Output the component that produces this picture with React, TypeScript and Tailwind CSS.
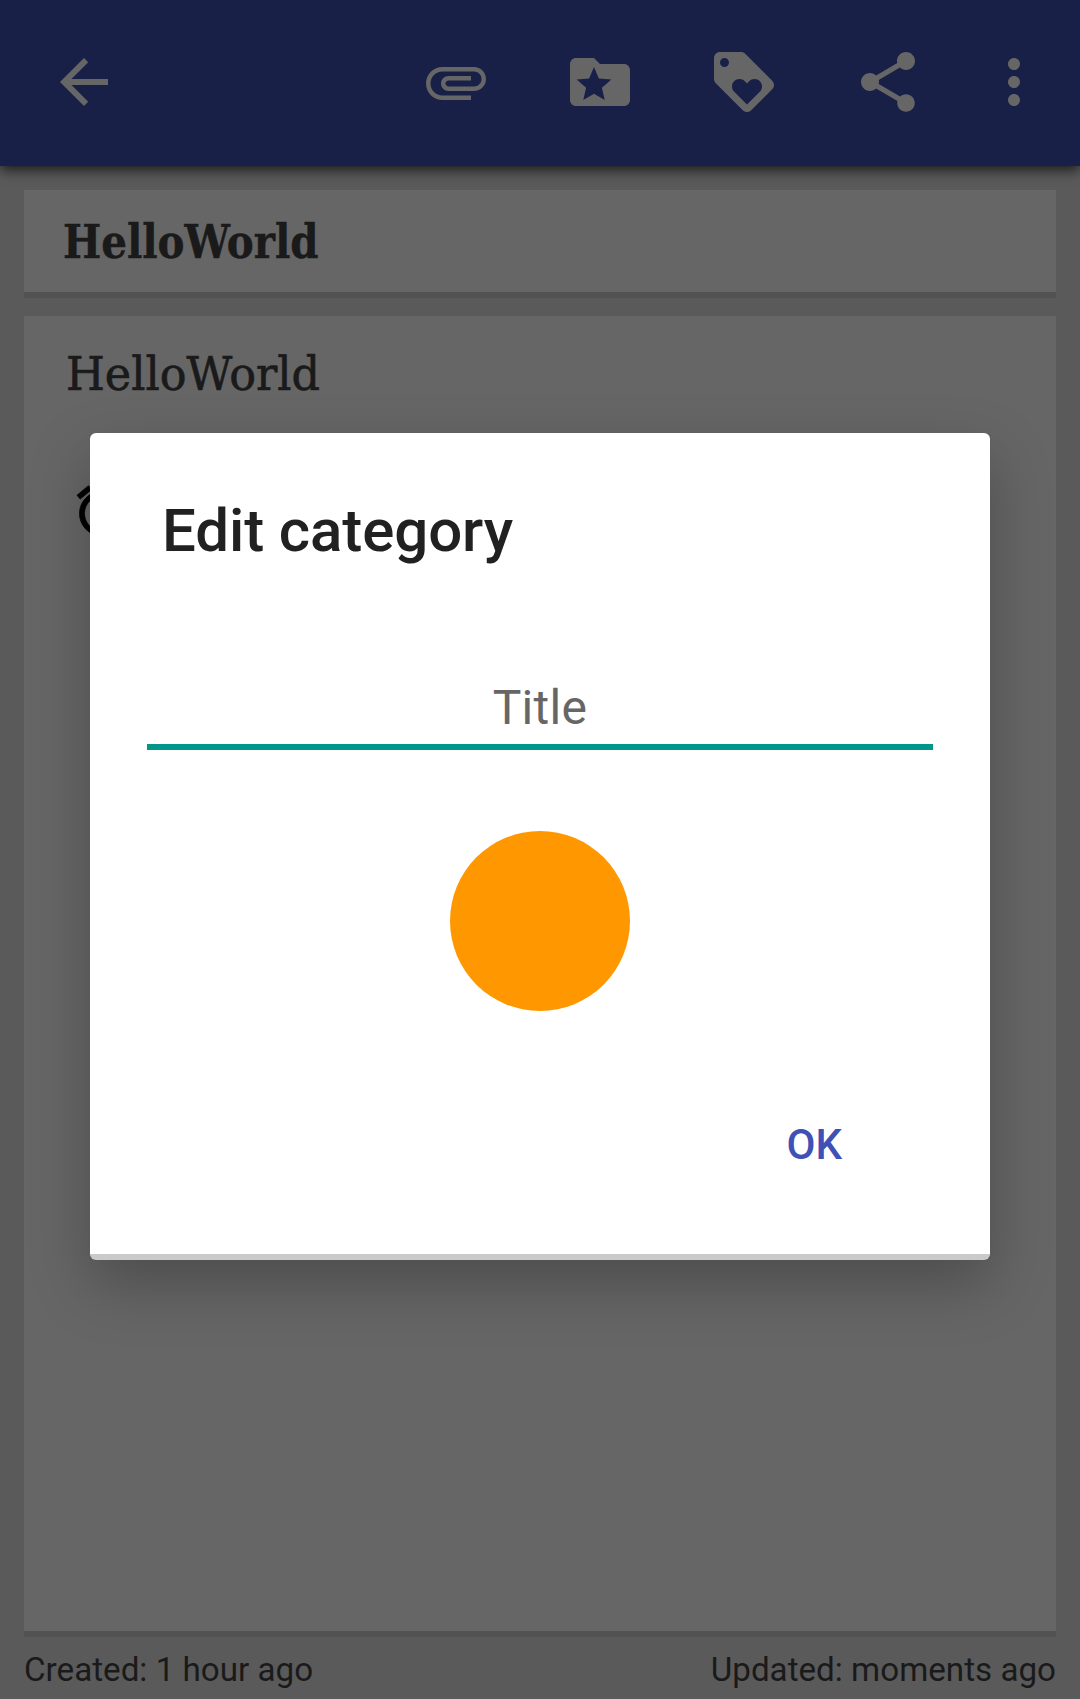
import React from "react";

const icons = {
  back: "M20 11H7.83l5.59-5.59L12 4l-8 8 8 8 1.41-1.41L7.83 13H20v-2z",
  attach:
    "M7.5 18C4.46 18 2 15.54 2 12.5S4.46 7 7.5 7H18c2.21 0 4 1.79 4 4s-1.79 4-4 4H9.5C8.12 15 7 13.88 7 12.5S8.12 10 9.5 10H17v1.5H9.5c-.55 0-1 .45-1 1s.45 1 1 1H18c1.38 0 2.5-1.12 2.5-2.5S19.38 8.5 18 8.5H7.5c-2.21 0-4 1.79-4 4s1.79 4 4 4H17V18H7.5z",
  folder:
    "M20 6h-8l-2-2H4c-1.1 0-2 .9-2 2v12c0 1.1.9 2 2 2h16c1.1 0 2-.9 2-2V8c0-1.1-.9-2-2-2zm-6.42 12L10 15.9 6.42 18l.95-4.07-3.16-2.74 4.16-.36L10 7l1.63 3.84 4.16.36-3.16 2.74.95 4.06z",
  tag: "M21.41 11.58l-9-9C12.05 2.22 11.55 2 11 2H4c-1.1 0-2 .9-2 2v7c0 .55.22 1.05.59 1.42l9 9c.36.36.86.58 1.41.58.55 0 1.05-.22 1.41-.59l7-7c.37-.36.59-.86.59-1.41 0-.55-.23-1.06-.59-1.42zM5.5 7C4.67 7 4 6.33 4 5.5S4.67 4 5.5 4 7 4.67 7 5.5 6.33 7 5.5 7zm11.77 8.27L13 19.54l-4.27-4.27C8.28 14.81 8 14.19 8 13.5c0-1.38 1.12-2.5 2.5-2.5.69 0 1.32.28 1.77.74l.73.72.73-.73c.45-.45 1.08-.73 1.77-.73 1.38 0 2.5 1.12 2.5 2.5 0 .69-.28 1.32-.73 1.77z",
  share:
    "M18 16.08c-.76 0-1.44.3-1.96.77L8.91 12.7c.05-.23.09-.46.09-.7s-.04-.47-.09-.7l7.05-4.11c.54.5 1.25.81 2.04.81 1.66 0 3-1.34 3-3s-1.34-3-3-3-3 1.34-3 3c0 .24.04.47.09.7L8.04 9.81C7.5 9.31 6.79 9 6 9c-1.66 0-3 1.34-3 3s1.34 3 3 3c.79 0 1.5-.31 2.04-.81l7.12 4.16c-.05.21-.08.43-.08.65 0 1.61 1.31 2.92 2.92 2.92s2.92-1.31 2.92-2.92-1.31-2.92-2.92-2.92z",
  more: "M12 8c1.1 0 2-.9 2-2s-.9-2-2-2-2 .9-2 2 .9 2 2 2zm0 2c-1.1 0-2 .9-2 2s.9 2 2 2 2-.9 2-2-.9-2-2-2zm0 6c-1.1 0-2 .9-2 2s.9 2 2 2 2-.9 2-2-.9-2-2-2z",
  alarm:
    "M22 5.72l-4.6-3.86-1.29 1.53 4.6 3.86L22 5.72zM7.88 3.39L6.6 1.86 2 5.71l1.29 1.53 4.59-3.85zM12.5 8H11v6l4.75 2.85.75-1.23-4-2.37V8zM12 4c-4.97 0-9 4.03-9 9s4.02 9 9 9a9 9 0 0 0 0-18zm0 16c-3.87 0-7-3.13-7-7s3.13-7 7-7 7 3.13 7 7-3.13 7-7 7z",
};

function Icon({ path, label }: { path: string; label: string }) {
  return (
    <button aria-label={label} className="size-[72px] text-[#666]">
      <svg viewBox="0 0 24 24" className="size-full fill-current">
        <path d={path} />
      </svg>
    </button>
  );
}

function Toolbar() {
  return (
    <header className="z-10 flex h-[166px] shrink-0 items-center justify-between bg-[#192048] pt-0 pr-[30px] pb-[2px] pl-12 shadow-[0_4px_12px_rgba(0,0,0,0.7)]">
      <Icon path={icons.back} label="Back" />
      <div className="flex">
        <div className="flex gap-[72px]">
          <Icon path={icons.attach} label="Attach" />
          <Icon path={icons.folder} label="Category" />
          <Icon path={icons.tag} label="Tags" />
          <Icon path={icons.share} label="Share" />
        </div>
        <div className="ml-[54px] flex">
          <Icon path={icons.more} label="More" />
        </div>
      </div>
    </header>
  );
}

function Dialog() {
  return (
    <div
      role="dialog"
      className="absolute top-[433px] left-[90px] z-20 flex h-[827px] w-[900px] flex-col overflow-hidden rounded-[6px] border-b-[6px] border-[#cacaca] bg-white shadow-[0_24px_60px_rgba(0,0,0,0.25)]"
    >
      <h2 className="mt-[63px] ml-[72px] text-[60px] leading-[70px] font-medium tracking-[-0.1px] text-[#212121]">
        Edit category
      </h2>
      <div className="mx-[57px] mt-[107px] flex h-[77px] items-start justify-center border-b-[6px] border-[#009688] text-[48px] leading-[70px] tracking-[0.3px] text-[#666]">
        Title
      </div>
      <div className="mt-[81px] size-[180px] self-center rounded-full bg-[#ff9800]" />
      <button className="mt-[108px] mr-[148px] self-end text-[42px] leading-[52px] font-medium text-[#3f51b5]">
        OK
      </button>
    </div>
  );
}

export default function App() {
  return (
    <div className="relative flex h-[1699px] w-[1080px] flex-col overflow-hidden bg-[#5a5a5a] font-['Roboto',sans-serif] text-[#1a1a1a]">
      <Toolbar />
      <main className="flex flex-1 flex-col px-6 pt-6">
        <section className="h-[108px] border-b-[6px] border-[#525252] bg-[#666] pt-[17px] pl-[39px]">
          <div className="w-fit origin-left scale-x-[0.86] font-['Roboto_Slab','DejaVu_Serif',serif] text-[47px] leading-[70px] font-bold [-webkit-text-stroke:0.5px_#1a1a1a]">
            HelloWorld
          </div>
        </section>
        <section className="mt-[18px] h-[1321px] border-b-[6px] border-[#525252] bg-[#666] pt-[23px] pl-[42px]">
          <div className="w-fit origin-left scale-x-[0.947] font-['Roboto_Slab','DejaVu_Serif',serif] text-[47px] leading-[70px] [-webkit-text-stroke:0.7px_#1a1a1a]">
            HelloWorld
          </div>
          <svg
            viewBox="0 0 24 24"
            className="mt-[72px] ml-[6px] size-[60px] fill-black stroke-black stroke-[0.3]"
          >
            <path d={icons.alarm} />
          </svg>
        </section>
        <footer className="flex justify-between pt-[13px] text-[33.2px] leading-[40px]">
          <span>Created: 1 hour ago</span>
          <span>Updated: moments ago</span>
        </footer>
      </main>
      <Dialog />
    </div>
  );
}
